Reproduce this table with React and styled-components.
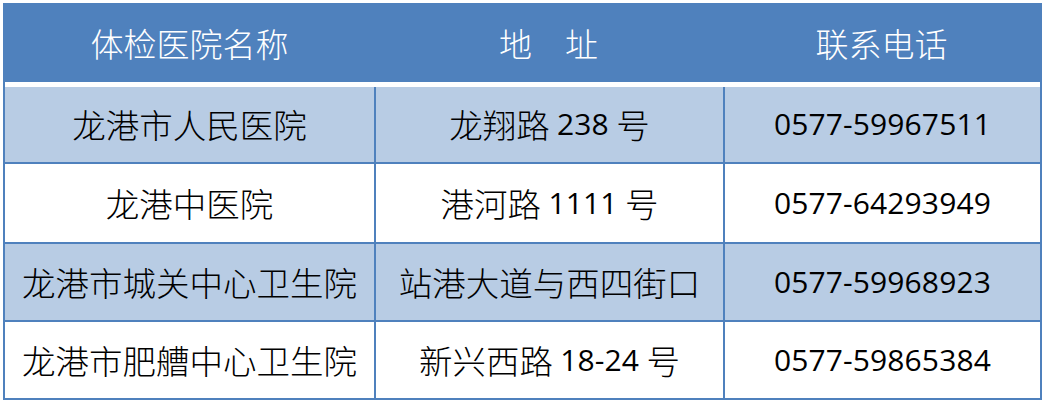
import React from "react";
import styled, { createGlobalStyle } from "styled-components";

const Global = createGlobalStyle`
  html, body { margin: 0; padding: 0; background: #ffffff; }
  body { font-family: "Noto Sans CJK SC", sans-serif; }
`;

const Page = styled.div`
  padding: 3px;
`;

const Table = styled.div`
  width: 1039px;
  box-sizing: border-box;
  border: 2px solid #4f81bd;
  display: flex;
  flex-direction: column;
`;

const COLS = "369px 349px 317px";

const Header = styled.div`
  display: grid;
  grid-template-columns: ${COLS};
  height: 77px;
  background: #4f81bd;
  border-bottom: 5px solid #ffffff;
`;

const HeadCell = styled.div`
  display: flex;
  align-items: center;
  justify-content: center;
  color: #ffffff;
  font-family: "Noto Sans CJK SC", sans-serif;
  font-size: 33px;
  font-weight: 300;
  padding-bottom: 2px;
`;

const Row = styled.div`
  display: grid;
  grid-template-columns: ${COLS};
  height: ${(p) => p.$h}px;
  background: ${(p) => (p.$shade ? "#b8cce4" : "#ffffff")};
  border-top: ${(p) => (p.$first ? "none" : "2px solid #4f81bd")};
`;

const Cell = styled.div`
  display: flex;
  align-items: center;
  justify-content: center;
  box-sizing: border-box;
  border-left: ${(p) => (p.$first ? "none" : "2px solid #4f81bd")};
  color: #000000;
  font-family: "Noto Sans CJK SC", sans-serif;
  font-size: 33.5px;
  font-weight: 300;
  white-space: pre;
  padding-bottom: 2px;
`;

const Num = styled.span`
  font-family: "Open Sans", sans-serif;
  font-size: 30px;
  font-weight: 400;
  letter-spacing: 0.1px;
`;

const rows = [
  { name: "龙港市人民医院", addr: ["龙翔路 ", "238", " 号"], tel: "0577-59967511", h: 75, shade: true },
  { name: "龙港中医院", addr: ["港河路 ", "1111", " 号"], tel: "0577-64293949", h: 78, shade: false },
  { name: "龙港市城关中心卫生院", addr: ["站港大道与西四街口", "", ""], tel: "0577-59968923", h: 76, shade: true },
  { name: "龙港市肥艚中心卫生院", addr: ["新兴西路 ", "18-24", " 号"], tel: "0577-59865384", h: 76, shade: false },
];

export default function App() {
  return (
    <>
      <Global />
      <Page>
        <Table>
          <Header>
            <HeadCell>体检医院名称</HeadCell>
            <HeadCell>地　址</HeadCell>
            <HeadCell>联系电话</HeadCell>
          </Header>
          {rows.map((r, i) => (
            <Row key={r.tel} $h={r.h} $shade={r.shade} $first={i === 0}>
              <Cell $first>{r.name}</Cell>
              <Cell>
                {r.addr[0]}
                {r.addr[1] && <Num>{r.addr[1]}</Num>}
                {r.addr[2]}
              </Cell>
              <Cell>
                <Num>{r.tel}</Num>
              </Cell>
            </Row>
          ))}
        </Table>
      </Page>
    </>
  );
}
